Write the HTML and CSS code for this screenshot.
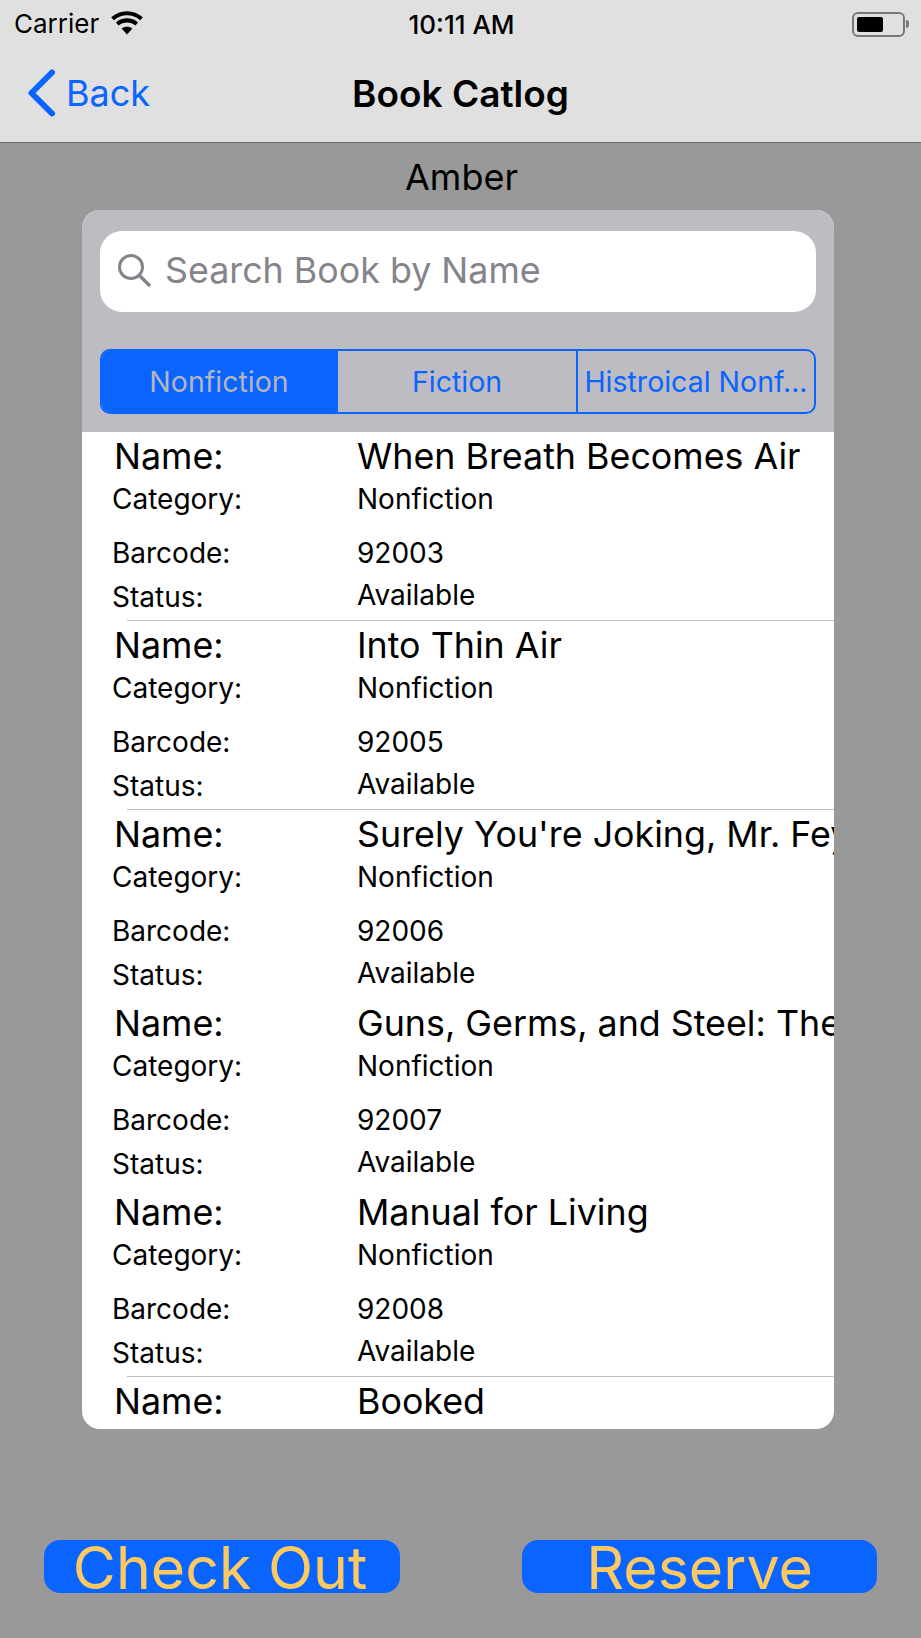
FILE: index.html
```html
<!DOCTYPE html>
<html lang="en">
<head>
    <meta charset="UTF-8">
    <meta name="viewport" content="width=device-width, initial-scale=1.0">
    <title>Book Catlog</title>
    <link rel="stylesheet" href="styles.css">
</head>
<body>
    <div class="top-bar">
        <div class="status-bar">
            <div class="status-left">
                <span>Carrier</span>
                <svg class="wifi" width="32" height="24" viewBox="0 0 32 24">
                    <path d="M16 23.5 L10.6 17.6 C13.6 15 18.4 15 21.4 17.6 Z" fill="#000"/>
                    <path d="M7.6 14.4 L4.9 11.4 C11 6 21 6 27.1 11.4 L24.4 14.4 C19.8 10.4 12.2 10.4 7.6 14.4 Z" fill="#000"/>
                    <path d="M2.9 9.2 L0.2 6.2 C9 -1.9 23 -1.9 31.8 6.2 L29.1 9.2 C21.8 2.6 10.2 2.6 2.9 9.2 Z" fill="#000"/>
                </svg>
            </div>
            <div class="status-time">10:11 AM</div>
            <div class="battery">
                <div class="battery-body"><div class="battery-level"></div></div>
                <div class="battery-cap"></div>
            </div>
        </div>
        <div class="nav-bar">
            <a class="back" href="#">
                <svg width="28" height="48" viewBox="0 0 28 48">
                    <path d="M25 3.5 L4.5 24 L25 44.5" fill="none" stroke="#0a64ff" stroke-width="6" stroke-linecap="round" stroke-linejoin="round"/>
                </svg>
                <span>Back</span>
            </a>
            <h1 class="nav-title">Book Catlog</h1>
        </div>
    </div>

    <div class="main">
        <p class="user-name">Amber</p>

        <div class="card">
            <div class="search-area">
                <div class="search-box">
                    <svg width="34" height="34" viewBox="0 0 34 34">
                        <circle cx="14" cy="14" r="11.5" fill="none" stroke="#85848b" stroke-width="3"/>
                        <path d="M22.5 22.5 L32 32" fill="none" stroke="#85848b" stroke-width="3.4" stroke-linecap="round"/>
                    </svg>
                    <span>Search Book by Name</span>
                </div>
                <div class="segments">
                    <div class="segment active">Nonfiction</div>
                    <div class="segment">Fiction</div>
                    <div class="segment">Histroical Nonf...</div>
                </div>
            </div>

            <div class="book-list">
                <div class="book line">
                    <span class="label name-label">Name:</span><span class="value title">When Breath Becomes Air</span>
                    <span class="label">Category:</span><span class="value">Nonfiction</span>
                    <span class="label">Barcode:</span><span class="value">92003</span>
                    <span class="label">Status:</span><span class="value status-value">Available</span>
                </div>
                <div class="book line">
                    <span class="label name-label">Name:</span><span class="value title">Into Thin Air</span>
                    <span class="label">Category:</span><span class="value">Nonfiction</span>
                    <span class="label">Barcode:</span><span class="value">92005</span>
                    <span class="label">Status:</span><span class="value status-value">Available</span>
                </div>
                <div class="book">
                    <span class="label name-label">Name:</span><span class="value title">Surely You're Joking, Mr. Feynman!</span>
                    <span class="label">Category:</span><span class="value">Nonfiction</span>
                    <span class="label">Barcode:</span><span class="value">92006</span>
                    <span class="label">Status:</span><span class="value status-value">Available</span>
                </div>
                <div class="book">
                    <span class="label name-label">Name:</span><span class="value title">Guns, Germs, and Steel: The Fates</span>
                    <span class="label">Category:</span><span class="value">Nonfiction</span>
                    <span class="label">Barcode:</span><span class="value">92007</span>
                    <span class="label">Status:</span><span class="value status-value">Available</span>
                </div>
                <div class="book line">
                    <span class="label name-label">Name:</span><span class="value title">Manual for Living</span>
                    <span class="label">Category:</span><span class="value">Nonfiction</span>
                    <span class="label">Barcode:</span><span class="value">92008</span>
                    <span class="label">Status:</span><span class="value status-value">Available</span>
                </div>
                <div class="book">
                    <span class="label name-label">Name:</span><span class="value title">Booked</span>
                </div>
            </div>
        </div>

        <div class="actions">
            <a class="action-btn checkout" href="#">Check Out</a>
            <a class="action-btn reserve" href="#">Reserve</a>
        </div>
    </div>
</body>
</html>
```
FILE: styles.css
```css
body {
    font-family: Inter, "Liberation Sans", sans-serif;
    margin: 0;
    padding: 0;
    width: 921px;
    height: 1638px;
    overflow: hidden;
    background-color: #999999;
    color: #000;
}

.top-bar {
    height: 143px;
    box-sizing: border-box;
    background-color: #e0e0e0;
    border-bottom: 1px solid #6e6e6e;
}

.status-bar {
    height: 48px;
    display: grid;
    grid-template-columns: 1fr auto 1fr;
    align-items: center;
    padding: 0 12px 0 14px;
    font-size: 26px;
}

.status-left {
    display: flex;
    align-items: center;
    gap: 12px;
    margin-top: -2px;
}

.status-time {
    font-weight: 500;
}

.battery {
    display: flex;
    align-items: center;
    justify-content: flex-end;
}

.battery-body {
    width: 53px;
    height: 25px;
    box-sizing: border-box;
    padding: 3px;
    border: 2px solid #777;
    border-radius: 6px;
}

.battery-level {
    width: 26px;
    height: 100%;
    background-color: #000;
    border-radius: 2px;
}

.battery-cap {
    width: 3px;
    height: 8px;
    margin-left: 1px;
    background-color: #777;
    border-radius: 0 3px 3px 0;
}

.nav-bar {
    height: 94px;
    box-sizing: border-box;
    padding-bottom: 4px;
    display: flex;
    align-items: center;
    justify-content: center;
    position: relative;
}

.back {
    position: absolute;
    left: 27px;
    top: 21px;
    display: flex;
    align-items: center;
    gap: 11px;
    color: #0a64ff;
    text-decoration: none;
    font-size: 36px;
}

.nav-title {
    margin: 0;
    font-size: 37px;
    font-weight: 600;
}

.main {
    display: flex;
    flex-direction: column;
    align-items: center;
}

.user-name {
    margin: 0;
    height: 67px;
    line-height: 68px;
    padding-left: 2px;
    font-size: 36px;
    text-align: center;
}

.card {
    width: 752px;
    height: 1219px;
    align-self: flex-start;
    margin-left: 82px;
    background-color: #fff;
    border-radius: 18px;
    overflow: hidden;
}

.search-area {
    height: 222px;
    box-sizing: border-box;
    padding: 21px 18px 0;
    background-color: #bdbcc3;
}

.search-box {
    height: 81px;
    box-sizing: border-box;
    display: flex;
    align-items: center;
    gap: 14px;
    padding: 0 0 3px 17px;
    background-color: #fff;
    border-radius: 22px;
    color: #85848b;
    font-size: 35.8px;
}

.segments {
    display: grid;
    grid-template-columns: 234px 240px 1fr;
    height: 65px;
    margin-top: 37px;
    box-sizing: border-box;
    border: 2px solid #0a64ff;
    border-radius: 10px;
    overflow: hidden;
}

.segment {
    display: flex;
    align-items: center;
    justify-content: center;
    white-space: nowrap;
    font-size: 28.5px;
    color: #0a64ff;
    border-left: 2px solid #0a64ff;
}

.segment:first-child {
    border-left: none;
}

.segment.active {
    background-color: #0a64ff;
    color: #b5b5bc;
}

.book {
    height: 189px;
    box-sizing: border-box;
    padding: 2px 0 0 30px;
    display: grid;
    grid-template-columns: 245px 1fr;
    grid-template-rows: 43px 54px 44px 1fr;
    white-space: nowrap;
    overflow: hidden;
    position: relative;
}

/* separator starts past the left padding, so it is not a plain border */
.book.line::after {
    content: "";
    position: absolute;
    left: 45px;
    right: 0;
    bottom: 0;
    height: 1px;
    background-color: #bcbcbc;
}

.label, .value {
    font-size: 28px;
    line-height: 44px;
}

.name-label, .title {
    font-size: 35.8px;
}

.name-label {
    margin-left: 2px;
}

.status-value {
    margin-top: -2px;
}

.actions {
    display: flex;
    justify-content: space-between;
    width: 833px;
    margin-top: 111px;
}

.action-btn {
    display: block;
    height: 53px;
    line-height: 55px;
    background-color: #0a64ff;
    border-radius: 16px;
    color: #fec961;
    font-size: 59px;
    text-align: center;
    text-decoration: none;
    white-space: nowrap;
}

.checkout {
    width: 356px;
    box-sizing: border-box;
    padding-right: 4px;
}

.reserve {
    width: 355px;
}
```
